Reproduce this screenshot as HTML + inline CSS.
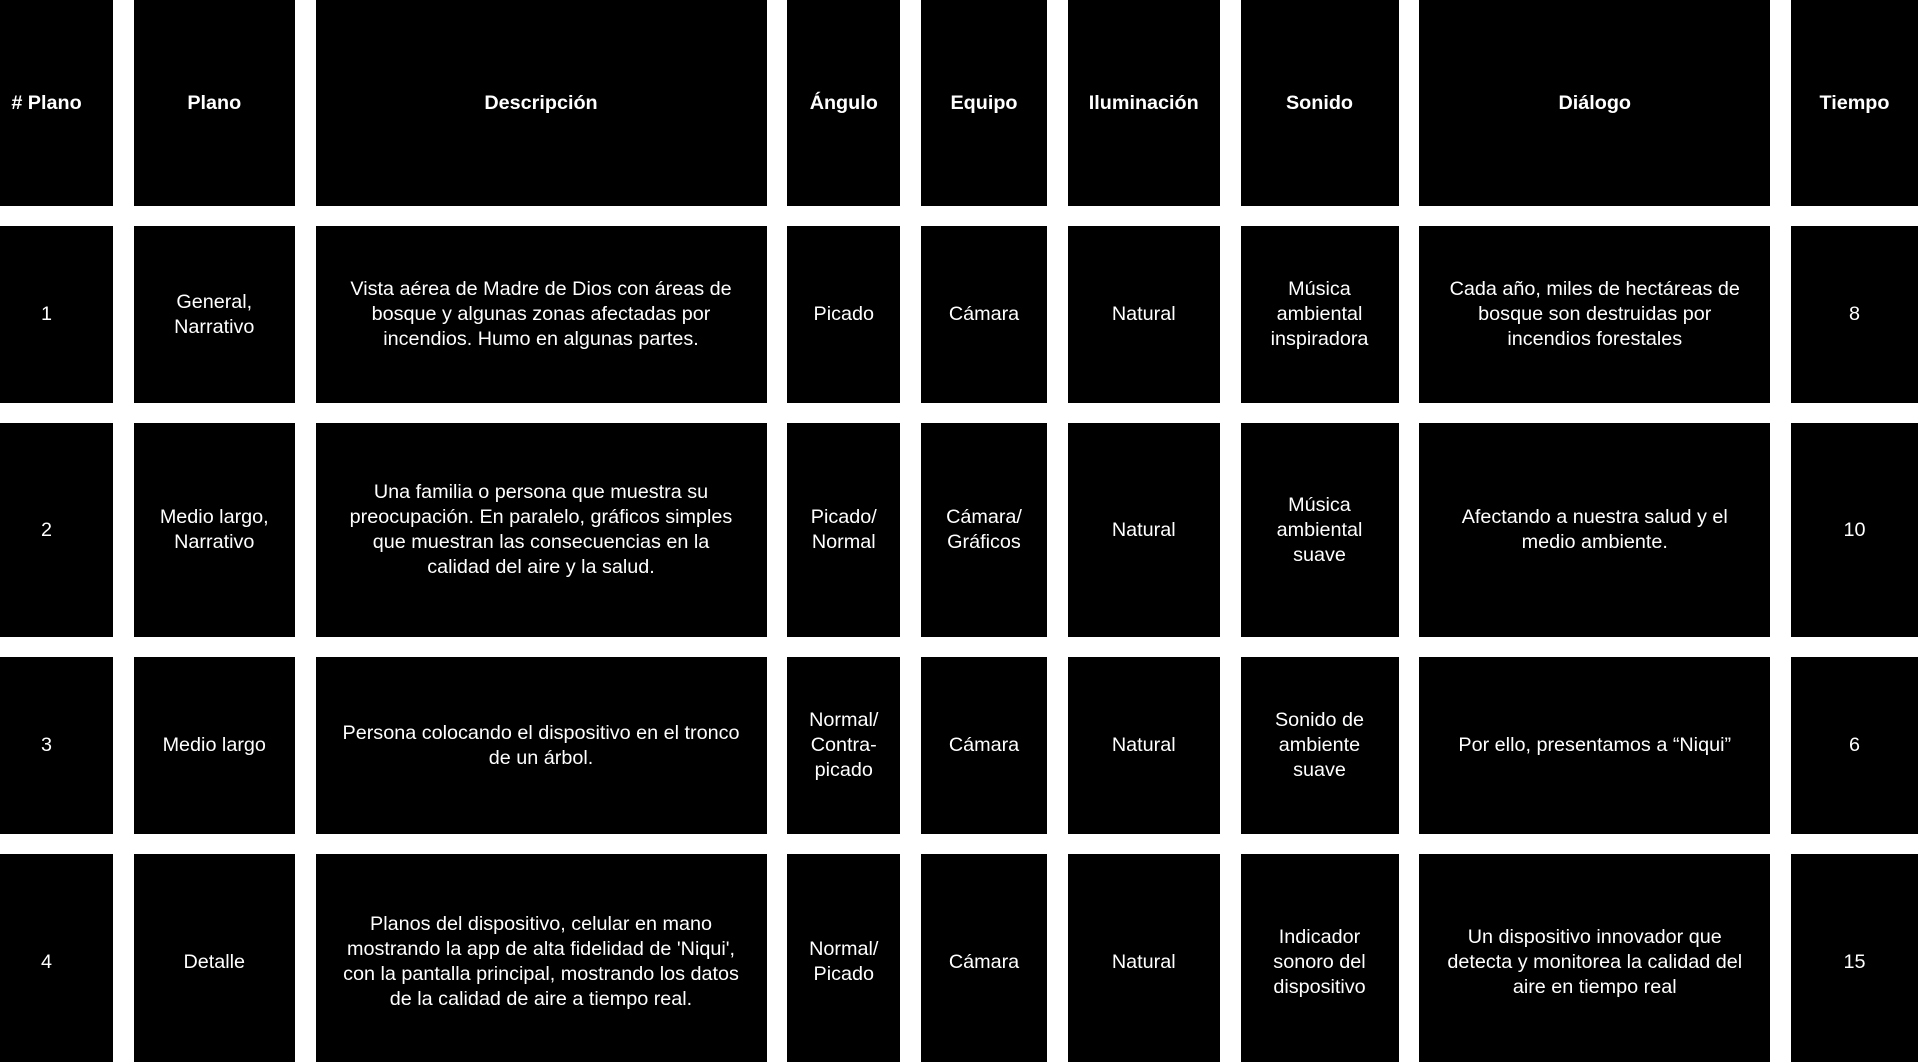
<!DOCTYPE html>
<html><head><meta charset="utf-8"><style>
html,body{margin:0;padding:0;background:#fff;width:1918px;height:1062px;overflow:hidden}
.g{display:grid;grid-template-columns:113px 161px 451px 113px 126px 152px 158px 351px 127px;grid-template-rows:206px 177px 214px 177px 216px;column-gap:20.75px;row-gap:20px;width:1918px;height:1070px}
.g div{background:#000;color:#fff;display:flex;align-items:center;justify-content:center;text-align:center;font-family:"Liberation Sans",sans-serif;font-size:19.8px;line-height:25px;white-space:nowrap}
.g div.f{padding-right:20px}
.h{font-weight:bold}
</style></head><body><div class="g">
<div class="h f"># Plano</div><div class="h">Plano</div><div class="h">Descripción</div><div class="h">Ángulo</div><div class="h">Equipo</div><div class="h">Iluminación</div><div class="h">Sonido</div><div class="h">Diálogo</div><div class="h">Tiempo</div>
<div class="f">1</div><div>General,<br>Narrativo</div><div>Vista aérea de Madre de Dios con áreas de<br>bosque y algunas zonas afectadas por<br>incendios. Humo en algunas partes.</div><div>Picado</div><div>Cámara</div><div>Natural</div><div>Música<br>ambiental<br>inspiradora</div><div>Cada año, miles de hectáreas de<br>bosque son destruidas por<br>incendios forestales</div><div>8</div>
<div class="f">2</div><div>Medio largo,<br>Narrativo</div><div>Una familia o persona que muestra su<br>preocupación. En paralelo, gráficos simples<br>que muestran las consecuencias en la<br>calidad del aire y la salud.</div><div>Picado/<br>Normal</div><div>Cámara/<br>Gráficos</div><div>Natural</div><div>Música<br>ambiental<br>suave</div><div>Afectando a nuestra salud y el<br>medio ambiente.</div><div>10</div>
<div class="f">3</div><div>Medio largo</div><div>Persona colocando el dispositivo en el tronco<br>de un árbol.</div><div>Normal/<br>Contra-<br>picado</div><div>Cámara</div><div>Natural</div><div>Sonido de<br>ambiente<br>suave</div><div>Por ello, presentamos a “Niqui”</div><div>6</div>
<div class="f">4</div><div>Detalle</div><div>Planos del dispositivo, celular en mano<br>mostrando la app de alta fidelidad de 'Niqui',<br>con la pantalla principal, mostrando los datos<br>de la calidad de aire a tiempo real.</div><div>Normal/<br>Picado</div><div>Cámara</div><div>Natural</div><div>Indicador<br>sonoro del<br>dispositivo</div><div>Un dispositivo innovador que<br>detecta y monitorea la calidad del<br>aire en tiempo real</div><div>15</div>
</div></body></html>
